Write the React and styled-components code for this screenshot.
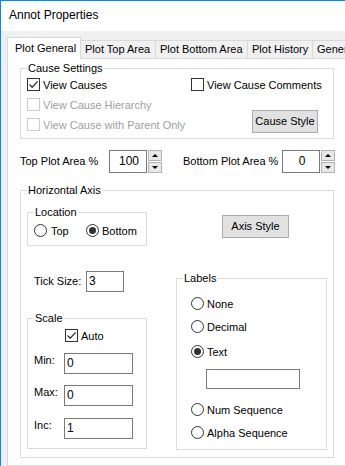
import React from "react";
import styled, { createGlobalStyle } from "styled-components";

const GlobalStyle = createGlobalStyle`
  html, body {
    margin: 0;
    padding: 0;
    background: #fff;
  }
  body {
    font-family: "Liberation Sans", Arial, sans-serif;
    font-size: 11px;
    color: #000;
  }
`;

const Window = styled.div`
  width: 345px;
  height: 466px;
  overflow: hidden;
  box-sizing: border-box;
  border-top: 1px solid #1883d7;
  border-left: 1px solid #1883d7;
  background: #f0f0f0;
  display: flex;
  flex-direction: column;
`;

const TitleBar = styled.div`
  flex: none;
  height: 30px;
  line-height: 29px;
  padding-left: 8px;
  background: #fff;
  font-size: 12px;
`;

const TabStrip = styled.div`
  flex: none;
  display: flex;
  align-items: flex-end;
  height: 27px;
  box-sizing: border-box;
  padding: 6px 0 0 6px;
`;

const Tab = styled.div`
  flex: none;
  position: relative;
  width: ${(p) => p.$w}px;
  height: ${(p) => (p.$active ? 22 : 18)}px;
  margin-left: ${(p) => (p.$first ? 0 : -1)}px;
  margin-bottom: ${(p) => (p.$active ? -1 : 0)}px;
  z-index: ${(p) => (p.$active ? 2 : 1)};
  box-sizing: border-box;
  border: 1px solid #d9d9d9;
  border-bottom: none;
  background: ${(p) => (p.$active ? "#fff" : "#f0f0f0")};
  font-size: 11px;
  line-height: ${(p) => (p.$active ? 20 : 17)}px;
  padding-left: ${(p) => (p.$active ? 7 : 4)}px;
  white-space: nowrap;
  overflow: hidden;
`;

const Panel = styled.div`
  flex: 1;
  width: 360px;
  margin-left: 6px;
  box-sizing: border-box;
  border: 1px solid #d9d9d9;
  background: #fff;
  display: flex;
  flex-direction: column;
  align-items: flex-start;
`;

const Group = styled.fieldset`
  flex: none;
  margin: ${(p) => p.$mt || 0}px 0 0 ${(p) => p.$ml || 0}px;
  padding: 0;
  width: ${(p) => p.$w}px;
  height: ${(p) => p.$h}px;
  box-sizing: border-box;
  border: 1px solid #dcdcdc;
  min-width: 0;
`;

const Legend = styled.legend`
  margin-left: 6px;
  padding: 0 1px;
  line-height: 13px;
  font-size: 11px;
`;

const CauseBody = styled.div`
  display: flex;
  padding: 2px 0 0 6px;
`;

const Stack = styled.div`
  display: flex;
  flex-direction: column;
  align-items: flex-start;
  gap: ${(p) => p.$gap || 0}px;
  width: ${(p) => (p.$w ? `${p.$w}px` : "auto")};
`;

const Option = styled.label`
  display: flex;
  align-items: center;
  gap: ${(p) => p.$gap || 3}px;
  height: 15px;
  margin: ${(p) => p.$m || "0"};
  color: ${(p) => (p.$disabled ? "#a0a0a0" : "#000")};
  white-space: nowrap;
`;

const Box = styled.span`
  flex: none;
  width: 13px;
  height: 13px;
  box-sizing: border-box;
  border: 1px solid ${(p) => (p.$disabled ? "#cccccc" : "#333")};
  background: #fff;
  display: flex;
  align-items: center;
  justify-content: center;
`;

const Ring = styled.span`
  flex: none;
  width: 13px;
  height: 13px;
  box-sizing: border-box;
  border: 1px solid #333;
  border-radius: 50%;
  background: #fff;
  display: flex;
  align-items: center;
  justify-content: center;

  &::after {
    content: "";
    display: ${(p) => (p.$on ? "block" : "none")};
    width: 7px;
    height: 7px;
    border-radius: 50%;
    background: #333;
  }
`;

const Button = styled.div`
  flex: none;
  width: ${(p) => p.$w}px;
  height: 23px;
  margin: ${(p) => p.$mt || 0}px 0 0 ${(p) => p.$ml || 0}px;
  box-sizing: border-box;
  border: 1px solid #adadad;
  background: #e1e1e1;
  text-align: center;
  line-height: 21px;
  font-size: 11px;
`;

const FieldRow = styled.div`
  flex: none;
  display: flex;
  align-items: ${(p) => (p.$top ? "flex-start" : "center")};
  margin: ${(p) => p.$m || "0"};
`;

const FieldLabel = styled.span`
  flex: none;
  width: ${(p) => p.$w}px;
  margin-left: ${(p) => p.$ml || 0}px;
  margin-top: ${(p) => p.$mt || 0}px;
  padding-left: ${(p) => p.$pl || 0}px;
  box-sizing: border-box;
  line-height: 13px;
  white-space: nowrap;
`;

const TextBox = styled.div`
  flex: none;
  width: ${(p) => p.$w}px;
  height: ${(p) => p.$h || 21}px;
  margin-left: ${(p) => p.$ml || 0}px;
  box-sizing: border-box;
  border: 1px solid #7a7a7a;
  background: #fff;
  padding-left: 2px;
  line-height: ${(p) => (p.$h || 21) - 2}px;
  font-size: 12px;
  text-align: ${(p) => (p.$center ? "center" : "left")};
`;

const Spinner = styled.div`
  flex: none;
  width: 14px;
  height: 23px;
  margin-left: 1px;
  display: flex;
  flex-direction: column;
  gap: 1px;
`;

const SpinHalf = styled.div`
  flex: 1;
  box-sizing: border-box;
  border: 1px solid #b4b4b4;
  background: #e8e8e8;
  display: flex;
  align-items: center;
  justify-content: center;

  &::after {
    content: "";
    width: 0;
    height: 0;
    border-left: 3px solid transparent;
    border-right: 3px solid transparent;
    ${(p) =>
      p.$down ? "border-top: 3px solid #000;" : "border-bottom: 3px solid #000;"}
  }
`;

const AxisBody = styled.div`
  display: flex;
  gap: 29px;
  padding-left: 6px;
`;

const RadioLine = styled.div`
  display: flex;
  padding: ${(p) => p.$pad || "0"};
`;

const LabelList = styled.div`
  display: flex;
  flex-direction: column;
  align-items: flex-start;
  padding: 11px 0 0 14px;
`;

const Check = ({ checked, disabled, label, m }) => (
  <Option $disabled={disabled} $m={m}>
    <Box $disabled={disabled}>
      {checked && (
        <svg width="11" height="11" viewBox="0 0 11 11">
          <path d="M1.5 5.5 L4.2 8.2 L9.6 2.4" fill="none" stroke="#333" strokeWidth="1.3" />
        </svg>
      )}
    </Box>
    {label}
  </Option>
);

const Radio = ({ on, label, w, m, gap }) => (
  <Option $m={m} $gap={gap} style={w ? { width: w } : undefined}>
    <Ring $on={on} />
    {label}
  </Option>
);

const Spin = ({ value }) => (
  <>
    <TextBox $w={38} $h={23} $center>
      {value}
    </TextBox>
    <Spinner>
      <SpinHalf />
      <SpinHalf $down />
    </Spinner>
  </>
);

export default function App() {
  return (
    <>
      <GlobalStyle />
      <Window>
        <TitleBar>Annot Properties</TitleBar>
        <TabStrip>
          <Tab $active $first $w={74}>Plot General</Tab>
          <Tab $w={76}>Plot Top Area</Tab>
          <Tab $w={93}>Plot Bottom Area</Tab>
          <Tab $w={66}>Plot History</Tab>
          <Tab $w={70}>General</Tab>
        </TabStrip>
        <Panel>
          <Group $w={314} $h={77} $mt={3} $ml={12}>
            <Legend>Cause Settings</Legend>
            <CauseBody>
              <Stack $gap={5} $w={164}>
                <Check checked label="View Causes" />
                <Check disabled label="View Cause Hierarchy" />
                <Check disabled label="View Cause with Parent Only" />
              </Stack>
              <Stack>
                <Check label="View Cause Comments" />
                <Button $w={66} $mt={18} $ml={61}>
                  Cause Style
                </Button>
              </Stack>
            </CauseBody>
          </Group>

          <FieldRow $m="11px 0 0 12px">
            <FieldLabel $w={89}>Top Plot Area %</FieldLabel>
            <Spin value="100" />
            <FieldLabel $w={99} $ml={21}>
              Bottom Plot Area %
            </FieldLabel>
            <Spin value="0" />
          </FieldRow>

          <Group $w={314} $h={274} $mt={11} $ml={12}>
            <Legend>Horizontal Axis</Legend>
            <AxisBody>
              <Stack $w={120}>
                <Group $w={120} $h={40} $mt={9}>
                  <Legend>Location</Legend>
                  <RadioLine $pad="4px 0 0 6px">
                    <Radio label="Top" w={52} gap={4} />
                    <Radio on label="Bottom" gap={3} />
                  </RadioLine>
                </Group>

                <FieldRow $m="25px 0 0 0">
                  <FieldLabel $w={59} $pl={7}>
                    Tick Size:
                  </FieldLabel>
                  <TextBox $w={38}>3</TextBox>
                </FieldRow>

                <Group $w={120} $h={137} $mt={20}>
                  <Legend>Scale</Legend>
                  <Check checked label="Auto" m="3px 0 0 37px" />
                  <FieldRow $top $m="10px 0 0 0">
                    <FieldLabel $w={36} $pl={6} $mt={1}>
                      Min:
                    </FieldLabel>
                    <TextBox $w={69}>0</TextBox>
                  </FieldRow>
                  <FieldRow $top $m="11px 0 0 0">
                    <FieldLabel $w={36} $pl={6} $mt={1}>
                      Max:
                    </FieldLabel>
                    <TextBox $w={69}>0</TextBox>
                  </FieldRow>
                  <FieldRow $top $m="12px 0 0 0">
                    <FieldLabel $w={36} $pl={6} $mt={1}>
                      Inc:
                    </FieldLabel>
                    <TextBox $w={69}>1</TextBox>
                  </FieldRow>
                </Group>
              </Stack>

              <Stack $w={151}>
                <Button $w={67} $mt={18} $ml={46}>
                  Axis Style
                </Button>
                <Group $w={151} $h={178} $mt={34}>
                  <Legend>Labels</Legend>
                  <LabelList>
                    <Radio label="None" />
                    <Radio label="Decimal" m="8px 0 0 0" />
                    <Radio on label="Text" m="10px 0 0 0" />
                    <TextBox $w={94} $h={20} $ml={15} style={{ marginTop: 10 }} />
                    <Radio label="Num Sequence" m="13px 0 0 0" />
                    <Radio label="Alpha Sequence" m="8px 0 0 0" />
                  </LabelList>
                </Group>
              </Stack>
            </AxisBody>
          </Group>
        </Panel>
      </Window>
    </>
  );
}
